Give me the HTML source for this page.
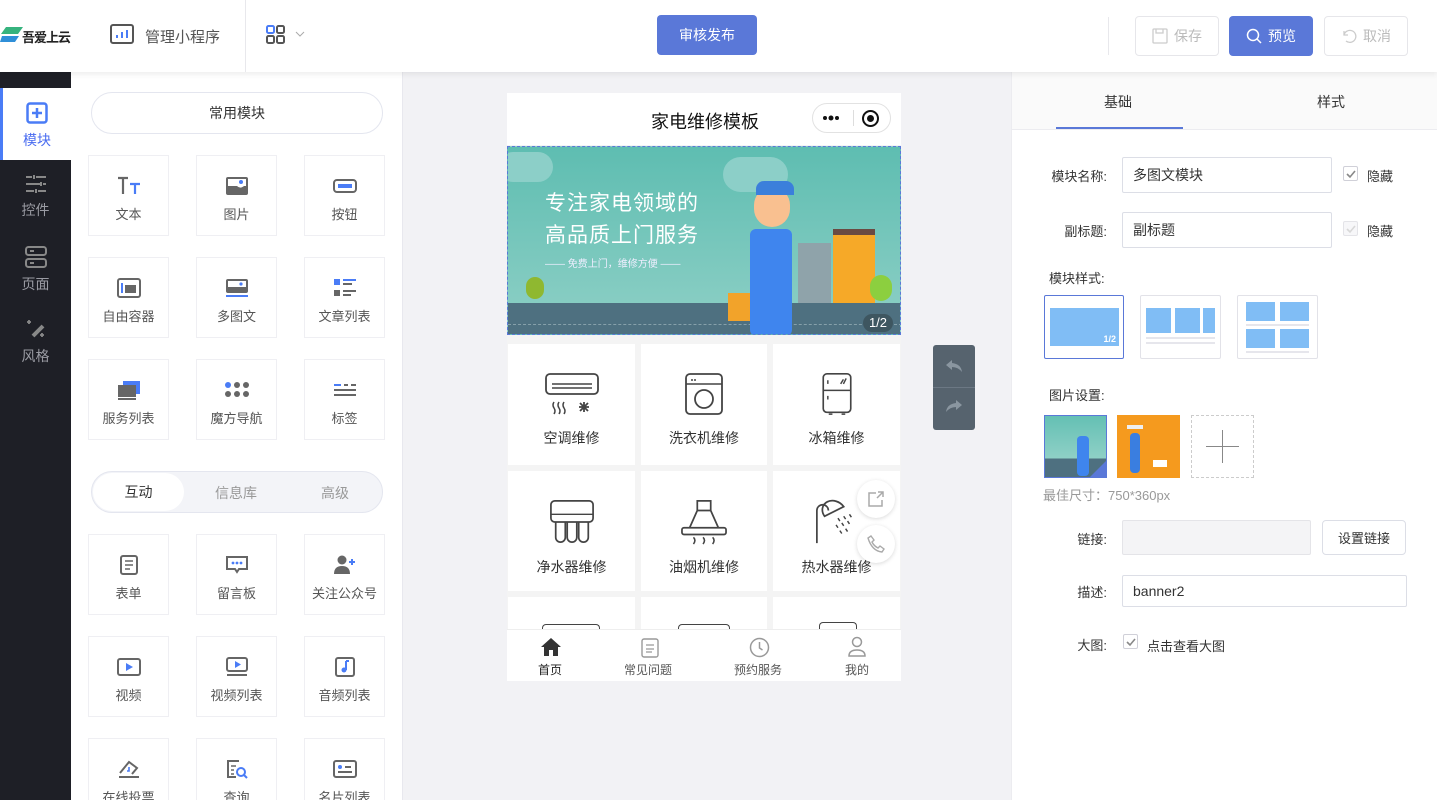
<!DOCTYPE html>
<html style="width:1437px;height:800px;overflow:hidden"><head><meta charset="utf-8">
<style>
*{margin:0;padding:0;box-sizing:border-box}
body{width:1437px;height:800px;overflow:hidden;position:relative;background:#f2f2f5;font-family:"Liberation Sans","Noto Sans CJK SC",sans-serif;color:#333;font-size:14px}
.a{position:absolute}
.top{left:0;top:0;width:1437px;height:72px;background:#fff;box-shadow:0 2px 6px rgba(0,0,0,.08);z-index:5}
.btn{position:absolute;border-radius:4px;font-size:14px;display:flex;align-items:center;justify-content:center;gap:6px}
.side{left:0;top:72px;width:71px;height:728px;background:#1e1f26}
.si{position:absolute;left:0;width:71px;height:72px;color:#9a9ba3;font-size:14px;text-align:center}
.si svg{display:block;margin:14px auto 6px}
.panel{left:71px;top:72px;width:332px;height:728px;background:#fff;border-right:1px solid #e8e8ee}
.clip{position:absolute;left:0;top:0;width:1437px;height:800px;overflow:hidden}
.cell{position:absolute;width:81px;height:81px;border:1px solid #efeff3;background:#fff;text-align:center;font-size:13px;color:#555}
.cell svg{display:block;margin:20px auto 8px}
.pill{position:absolute;left:91px;width:292px;height:42px;border:1px solid #e4e6ef;border-radius:21px;text-align:center;line-height:40px;font-size:14px}
.canvas{left:403px;top:72px;width:608px;height:728px;background:#f2f2f5}
.phone{left:507px;top:93px;width:394px;height:588px;background:#f4f4f4;overflow:hidden}
.gc{position:absolute;background:#fff;text-align:center;font-size:14px;color:#333}
.gc svg{display:block;margin:28px auto 12px}
.right{left:1011px;top:72px;width:426px;height:728px;background:#fff;border-left:1px solid #ececf0}
.lbl{position:absolute;font-size:13px;color:#333;text-align:right;width:110px}
.inp{position:absolute;border:1px solid #dcdee6;border-radius:2px;font-size:14px;padding-left:10px;display:flex;align-items:center;background:#fff}
.cb{position:absolute;width:15px;height:15px;border:1px solid #d0d0d8;border-radius:2px;background:#fff}
</style></head><body><div class="clip">

<!-- TOP BAR -->
<div class="a top">
  <svg class="a" style="left:0;top:26px" width="24" height="18" viewBox="0 0 24 18"><path d="M6 1h17l-5 7H1z" fill="#36b37e"/><path d="M2 10h17l-4 6H0z" fill="#2f8fd8"/></svg>
  <div class="a" style="left:22px;top:27px;font-size:13px;font-weight:bold;color:#222;letter-spacing:-1px">吾爱上云</div>
  <svg class="a" style="left:110px;top:24px" width="24" height="20" viewBox="0 0 24 20"><rect x="1" y="1" width="22" height="18" rx="2" fill="none" stroke="#555" stroke-width="2"/><path d="M7 14v-3M12 14V8M17 14V6" stroke="#4a7cf6" stroke-width="2"/></svg>
  <div class="a" style="left:145px;top:26px;font-size:15px;color:#555">管理小程序</div>
  <div class="a" style="left:245px;top:0;width:1px;height:72px;background:#e8e8ec"></div>
  <svg class="a" style="left:266px;top:25px" width="20" height="19" viewBox="0 0 20 19"><rect x="1" y="1" width="7" height="7" rx="1.5" fill="none" stroke="#4a7cf6" stroke-width="2"/><rect x="11" y="1" width="7" height="7" rx="1.5" fill="none" stroke="#555" stroke-width="2"/><rect x="1" y="11" width="7" height="7" rx="1.5" fill="none" stroke="#555" stroke-width="2"/><rect x="11" y="11" width="7" height="7" rx="1.5" fill="none" stroke="#555" stroke-width="2"/></svg>
  <svg class="a" style="left:295px;top:31px" width="10" height="6"><path d="M1 1l4 4 4-4" fill="none" stroke="#aaa"/></svg>
  <div class="btn" style="left:657px;top:15px;width:100px;height:40px;background:#5a78d8;color:#fff">审核发布</div>
  <div class="a" style="left:1108px;top:17px;width:1px;height:38px;background:#e8e8ec"></div>
  <div class="btn" style="left:1135px;top:16px;width:84px;height:40px;border:1px solid #e6e6ea;color:#bbb"><svg width="16" height="16" viewBox="0 0 16 16"><rect x="1" y="1" width="14" height="14" rx="1" fill="none" stroke="#ccc" stroke-width="1.3"/><path d="M4 1v4h7V1" fill="none" stroke="#ccc" stroke-width="1.3"/></svg>保存</div>
  <div class="btn" style="left:1229px;top:16px;width:84px;height:40px;background:#5a78d8;color:#fff"><svg width="16" height="16" viewBox="0 0 16 16"><circle cx="7" cy="7" r="5.5" fill="none" stroke="#fff" stroke-width="1.5"/><path d="M11 11l4 4" stroke="#fff" stroke-width="1.5"/></svg>预览</div>
  <div class="btn" style="left:1324px;top:16px;width:84px;height:40px;border:1px solid #e6e6ea;color:#bbb"><svg width="16" height="16" viewBox="0 0 16 16"><path d="M3 3v4h4" fill="none" stroke="#ccc" stroke-width="1.3"/><path d="M3 7a6 6 0 1 1 2 6" fill="none" stroke="#ccc" stroke-width="1.3"/></svg>取消</div>
</div>

<!-- SIDEBAR -->
<div class="a side">
  <div class="si" style="top:16px;background:#fff;color:#4a6cf0;border-left:3px solid #4a7cf6">
    <svg width="22" height="22" viewBox="0 0 22 22"><rect x="1.5" y="1.5" width="19" height="19" rx="2.5" fill="none" stroke="#4a7cf6" stroke-width="2.5"/><path d="M11 6v10M6 11h10" stroke="#4a7cf6" stroke-width="2.5"/></svg>模块</div>
  <div class="si" style="top:88px"><svg width="22" height="20" viewBox="0 0 22 20"><path d="M1 3h6M11 3h10M1 10h14M18 10h3M1 17h8M13 17h8M9 1v4M16 8v4M11 15v4" stroke="#888" stroke-width="2"/></svg>控件</div>
  <div class="si" style="top:160px"><svg width="22" height="22" viewBox="0 0 22 22"><rect x="1" y="1" width="20" height="8" rx="2.5" fill="none" stroke="#888" stroke-width="2"/><rect x="1" y="13" width="20" height="8" rx="2.5" fill="none" stroke="#888" stroke-width="2"/><path d="M5 5h4M5 17h4" stroke="#888" stroke-width="2"/></svg>页面</div>
  <div class="si" style="top:232px"><svg width="22" height="22" viewBox="0 0 22 22"><path d="M8 18l10-10" stroke="#888" stroke-width="4"/><path d="M4 2v4M2 4h4M17 15v4M15 17h4" stroke="#888" stroke-width="1.8"/></svg>风格</div>
</div>

<!-- MODULE PANEL -->
<div class="a panel"></div>
<div class="pill" style="top:92px">常用模块</div>
<div class="cell" style="left:88px;top:155px"><svg width="24" height="20" viewBox="0 0 24 20"><path d="M1 2h10M6 2v16" stroke="#666" stroke-width="2.2"/><path d="M13 8h10M18 8v10" stroke="#4a7cf6" stroke-width="2.2"/></svg>文本</div>
<div class="cell" style="left:196px;top:155px"><svg width="24" height="20" viewBox="0 0 24 20"><rect x="1" y="1" width="22" height="18" rx="2" fill="#666"/><rect x="3" y="3" width="18" height="7" fill="#fff"/><path d="M3 10q5-4 9 0t9-2v1H3z" fill="#fff"/><circle cx="16" cy="6" r="2" fill="#4a7cf6"/></svg>图片</div>
<div class="cell" style="left:304px;top:155px"><svg width="24" height="20" viewBox="0 0 24 20"><rect x="1" y="4" width="22" height="12" rx="3" fill="none" stroke="#666" stroke-width="2"/><rect x="5" y="8" width="14" height="4" fill="#4a7cf6"/></svg>按钮</div>
<div class="cell" style="left:88px;top:257px"><svg width="24" height="20" viewBox="0 0 24 20"><rect x="1" y="1" width="22" height="18" rx="2" fill="none" stroke="#666" stroke-width="2"/><path d="M5 5v10" stroke="#4a7cf6" stroke-width="2"/><rect x="8" y="5" width="11" height="10" fill="#666"/><rect x="8" y="5" width="11" height="2" fill="#fff"/></svg>自由容器</div>
<div class="cell" style="left:196px;top:257px"><svg width="24" height="20" viewBox="0 0 24 20"><rect x="1" y="1" width="22" height="14" rx="2" fill="#666"/><rect x="3" y="3" width="18" height="6" fill="#fff"/><circle cx="16" cy="6" r="1.6" fill="#4a7cf6"/><path d="M1 18h22" stroke="#4a7cf6" stroke-width="2"/></svg>多图文</div>
<div class="cell" style="left:304px;top:257px"><svg width="24" height="20" viewBox="0 0 24 20"><rect x="1" y="1" width="6" height="6" fill="#4a7cf6"/><rect x="1" y="12" width="6" height="6" fill="#666"/><path d="M10 6h9M10 13h13M10 17h8" stroke="#666" stroke-width="2"/><path d="M10 2h13" stroke="#4a7cf6" stroke-width="2"/></svg>文章列表</div>
<div class="cell" style="left:88px;top:359px"><svg width="24" height="20" viewBox="0 0 24 20"><rect x="6" y="1" width="17" height="13" fill="#4a7cf6"/><rect x="1" y="5" width="18" height="12" fill="#666"/><path d="M1 19h18" stroke="#666" stroke-width="2"/></svg>服务列表</div>
<div class="cell" style="left:196px;top:359px"><svg width="26" height="20" viewBox="0 0 26 20"><circle cx="4" cy="5" r="3" fill="#4a7cf6"/><circle cx="13" cy="5" r="3" fill="#666"/><circle cx="22" cy="5" r="3" fill="#666"/><circle cx="4" cy="14" r="3" fill="#666"/><circle cx="13" cy="14" r="3" fill="#666"/><circle cx="22" cy="14" r="3" fill="#666"/></svg>魔方导航</div>
<div class="cell" style="left:304px;top:359px"><svg width="24" height="20" viewBox="0 0 24 20"><path d="M1 5h7" stroke="#4a7cf6" stroke-width="2"/><path d="M11 5h4M18 5h5M1 10h22M1 15h22" stroke="#666" stroke-width="2"/></svg>标签</div>

<div class="pill" style="top:471px;background:#f3f4f8;color:#999"></div>
<div class="a" style="left:93px;top:473px;width:91px;height:38px;border-radius:19px;background:#fff;text-align:center;line-height:38px;color:#333">互动</div>
<div class="a" style="left:215px;top:483px;color:#999">信息库</div>
<div class="a" style="left:321px;top:483px;color:#999">高级</div>

<div class="cell" style="left:88px;top:534px"><svg width="24" height="20" viewBox="0 0 24 20"><rect x="4" y="1" width="16" height="18" rx="2" fill="none" stroke="#666" stroke-width="2"/><path d="M8 6h8M8 10h8M8 14h5" stroke="#666" stroke-width="1.6"/></svg>表单</div>
<div class="cell" style="left:196px;top:534px"><svg width="24" height="20" viewBox="0 0 24 20"><path d="M2 2h20v12h-8l-2 3-2-3H2z" fill="none" stroke="#666" stroke-width="2"/><circle cx="8" cy="8" r="1.4" fill="#4a7cf6"/><circle cx="12" cy="8" r="1.4" fill="#4a7cf6"/><circle cx="16" cy="8" r="1.4" fill="#4a7cf6"/></svg>留言板</div>
<div class="cell" style="left:304px;top:534px"><svg width="24" height="20" viewBox="0 0 24 20"><circle cx="9" cy="5" r="4.5" fill="#666"/><path d="M1 19q0-8 8-8t8 8z" fill="#666"/><path d="M19 4v6M16 7h6" stroke="#4a7cf6" stroke-width="2"/></svg>关注公众号</div>
<div class="cell" style="left:88px;top:636px"><svg width="24" height="20" viewBox="0 0 24 20"><rect x="1" y="2" width="22" height="16" rx="2" fill="none" stroke="#666" stroke-width="2"/><path d="M9 6v8l7-4z" fill="#4a7cf6"/></svg>视频</div>
<div class="cell" style="left:196px;top:636px"><svg width="24" height="20" viewBox="0 0 24 20"><rect x="2" y="1" width="20" height="13" rx="2" fill="none" stroke="#666" stroke-width="2"/><path d="M10 4v7l6-3.5z" fill="#4a7cf6"/><path d="M2 18h20" stroke="#666" stroke-width="2"/></svg>视频列表</div>
<div class="cell" style="left:304px;top:636px"><svg width="24" height="20" viewBox="0 0 24 20"><rect x="3" y="1" width="18" height="18" rx="2" fill="none" stroke="#666" stroke-width="2"/><path d="M13 4v9" stroke="#4a7cf6" stroke-width="2"/><circle cx="11" cy="13" r="2.5" fill="#4a7cf6"/><path d="M13 4h3" stroke="#4a7cf6" stroke-width="2"/></svg>音频列表</div>
<div class="cell" style="left:88px;top:738px"><svg width="24" height="20" viewBox="0 0 24 20"><path d="M3 14l9-11 8 6-5 6" fill="none" stroke="#666" stroke-width="2"/><path d="M2 18h20" stroke="#666" stroke-width="2"/><path d="M12 8v4h-2" stroke="#4a7cf6" stroke-width="1.6" fill="none"/></svg>在线投票</div>
<div class="cell" style="left:196px;top:738px"><svg width="24" height="20" viewBox="0 0 24 20"><path d="M14 2H3v16h8" fill="none" stroke="#666" stroke-width="2"/><path d="M6 7h5M6 11h3M6 15h3" stroke="#666" stroke-width="1.6"/><circle cx="16" cy="13" r="4" fill="none" stroke="#4a7cf6" stroke-width="2"/><path d="M19 16l3 3" stroke="#4a7cf6" stroke-width="2"/></svg>查询</div>
<div class="cell" style="left:304px;top:738px"><svg width="24" height="20" viewBox="0 0 24 20"><rect x="1" y="2" width="22" height="16" rx="2" fill="none" stroke="#666" stroke-width="2"/><circle cx="7" cy="8" r="2" fill="#4a7cf6"/><path d="M5 13h14M12 8h6" stroke="#666" stroke-width="2"/></svg>名片列表</div>

<!-- CANVAS -->
<div class="a canvas"></div>
<div class="a phone">
  <div class="a" style="left:0;top:0;width:394px;height:52px;background:#fff"></div>
  <div class="a" style="left:144px;top:15px;font-size:18px;color:#111">家电维修模板</div>
  <div class="a" style="left:305px;top:10px;width:79px;height:30px;border:1px solid #e2e2e2;border-radius:15px;background:#fff"></div>
  <div class="a" style="left:316px;top:23px;width:4px;height:4px;border-radius:2px;background:#111;box-shadow:6px 0 0 0.5px #111,12px 0 0 #111"></div>
  <div class="a" style="left:346px;top:17px;width:1px;height:16px;background:#ddd"></div>
  <div class="a" style="left:355px;top:17px;width:17px;height:17px;border-radius:50%;border:2px solid #111"></div>
  <div class="a" style="left:360px;top:22px;width:7px;height:7px;border-radius:50%;background:#111"></div>
  <!-- banner -->
  <div class="a" style="left:0;top:53px;width:394px;height:189px;background:linear-gradient(#5ebdb1,#8fd0c6);border:1px dashed #5a78d8;overflow:hidden">
    <div class="a" style="left:-10px;top:5px;width:55px;height:30px;border-radius:15px;background:#8ccfc8"></div>
    <div class="a" style="left:215px;top:10px;width:65px;height:35px;border-radius:18px;background:#8ccfc8"></div>
    <div class="a" style="left:37px;top:40px;font-size:21px;color:#fff;letter-spacing:1px">专注家电领域的</div>
    <div class="a" style="left:37px;top:72px;font-size:21px;color:#fff;letter-spacing:1px">高品质上门服务</div>
    <div class="a" style="left:37px;top:108px;font-size:10px;color:#eef">——  免费上门，维修方便  ——</div>
    <div class="a" style="left:290px;top:96px;width:33px;height:86px;background:#8fa3aa"></div>
    <div class="a" style="left:325px;top:86px;width:42px;height:100px;background:#f6a928"></div>
    <div class="a" style="left:325px;top:82px;width:42px;height:6px;background:#6a4a42"></div>
    <div class="a" style="left:18px;top:130px;width:18px;height:22px;border-radius:9px;background:#8fb830"></div>
    <div class="a" style="left:362px;top:128px;width:22px;height:26px;border-radius:11px;background:#8ccf3f"></div>
    <div class="a" style="left:0;top:156px;width:394px;height:33px;background:#4e7080"></div>
    <div class="a" style="left:0;top:177px;width:394px;border-top:1px dashed #86a0aa"></div>
    <div class="a" style="left:220px;top:146px;width:32px;height:28px;background:#f2a32a"></div>
    <div class="a" style="left:246px;top:40px;width:36px;height:40px;border-radius:18px;background:#f9c090"></div>
    <div class="a" style="left:248px;top:34px;width:38px;height:14px;border-radius:8px 8px 0 0;background:#3b7fdb"></div>
    <div class="a" style="left:242px;top:82px;width:42px;height:107px;border-radius:6px;background:#3f85ee"></div>
    <div class="a" style="left:355px;top:167px;width:30px;height:18px;border-radius:9px;background:#3e5660;color:#fff;font-size:13px;text-align:center;line-height:18px">1/2</div>
  </div>
  <!-- grid -->
  <div class="gc" style="left:1px;top:251px;width:127px;height:121px"><svg width="56" height="44" viewBox="0 0 56 44"><rect x="2" y="2" width="52" height="20" rx="4" fill="none" stroke="#444" stroke-width="1.8"/><path d="M8 12h40M8 16h40" stroke="#444" stroke-width="1.5"/><path d="M10 30q-2 3 0 6t0 6M15 30q-2 3 0 6t0 6M20 30q-2 3 0 6t0 6" fill="none" stroke="#444" stroke-width="1.5"/><path d="M40 30v10M35 35h10M36 31l8 8M44 31l-8 8" stroke="#444" stroke-width="1.8"/></svg>空调维修</div>
  <div class="gc" style="left:134px;top:251px;width:126px;height:121px"><svg width="40" height="44" viewBox="0 0 40 44"><rect x="2" y="2" width="36" height="40" rx="4" fill="none" stroke="#444" stroke-width="1.8"/><path d="M2 12h36" stroke="#444" stroke-width="1.5"/><circle cx="8" cy="8" r="1" fill="#444"/><circle cx="11" cy="8" r="1" fill="#444"/><circle cx="20" cy="27" r="9" fill="none" stroke="#444" stroke-width="1.8"/></svg>洗衣机维修</div>
  <div class="gc" style="left:266px;top:251px;width:127px;height:121px"><svg width="34" height="44" viewBox="0 0 34 48"><rect x="2" y="2" width="30" height="42" rx="4" fill="none" stroke="#444" stroke-width="1.8"/><path d="M2 20h30M7 9v4M7 26v4M8 46h4M22 46h4M24 8l-3 5M27 7l-3 6" stroke="#444" stroke-width="1.6"/></svg>冰箱维修</div>
  <div class="gc" style="left:1px;top:378px;width:127px;height:120px"><svg width="48" height="46" viewBox="0 0 48 48"><rect x="2" y="2" width="44" height="22" rx="4" fill="none" stroke="#444" stroke-width="1.8"/><path d="M2 16h44" stroke="#444" stroke-width="1.5"/><path d="M7 24v16a5 5 0 0 0 10 0V24M19 24v16a5 5 0 0 0 10 0V24M31 24v16a5 5 0 0 0 10 0V24" fill="none" stroke="#444" stroke-width="1.8"/></svg>净水器维修</div>
  <div class="gc" style="left:134px;top:378px;width:126px;height:120px"><svg width="50" height="46" viewBox="0 0 50 48"><path d="M18 2h14v10H18zM18 12l-8 18M32 12l8 18" fill="none" stroke="#444" stroke-width="1.8"/><rect x="2" y="30" width="46" height="7" rx="2" fill="none" stroke="#444" stroke-width="1.8"/><path d="M14 40q3 3 0 7M24 40q3 3 0 7M34 40q3 3 0 7" fill="none" stroke="#444" stroke-width="1.6"/></svg>油烟机维修</div>
  <div class="gc" style="left:266px;top:378px;width:127px;height:120px"><svg width="50" height="46" viewBox="0 0 50 48"><path d="M4 46V12a6 6 0 0 1 12 0" fill="none" stroke="#444" stroke-width="1.8"/><path d="M12 18a12 10 30 0 1 20-10z" fill="none" stroke="#444" stroke-width="1.8"/><path d="M26 20l2 3M32 18l2 3M38 16l2 3M24 27l2 3M30 25l2 3M36 23l2 3M28 33l2 3M34 31l2 3" stroke="#444" stroke-width="1.5"/></svg>热水器维修</div>
  <div class="gc" style="left:1px;top:504px;width:127px;height:40px"></div>
  <div class="gc" style="left:134px;top:504px;width:126px;height:40px"></div>
  <div class="gc" style="left:266px;top:504px;width:127px;height:40px"></div>
  <div class="a" style="left:35px;top:531px;width:58px;height:10px;border:1.8px solid #444;border-bottom:none;border-radius:4px 4px 0 0"></div>
  <div class="a" style="left:171px;top:531px;width:52px;height:10px;border:1.8px solid #444;border-bottom:none;border-radius:4px 4px 0 0"></div>
  <div class="a" style="left:312px;top:529px;width:38px;height:10px;border:1.8px solid #444;border-bottom:none;border-radius:4px 4px 0 0"></div>
  <!-- float buttons -->
  <div class="a" style="left:350px;top:387px;width:38px;height:38px;border-radius:50%;background:#fff;box-shadow:0 1px 4px rgba(0,0,0,.15)"><svg style="margin:10px" width="18" height="18" viewBox="0 0 18 18"><path d="M9 3H2v13h13V10M10 8l6-6M11 2h5v5" fill="none" stroke="#aaa" stroke-width="1.5"/></svg></div>
  <div class="a" style="left:350px;top:432px;width:38px;height:38px;border-radius:50%;background:#fff;box-shadow:0 1px 4px rgba(0,0,0,.15)"><svg style="margin:10px" width="18" height="18" viewBox="0 0 18 18"><path d="M4 1l3 4-2 2q2 4 6 6l2-2 4 3-2 3Q5 16 1 3z" fill="none" stroke="#aaa" stroke-width="1.4"/></svg></div>
  <!-- tabbar -->
  <div class="a" style="left:0;top:536px;width:394px;height:52px;background:#fff;border-top:1px solid #eee;font-size:12px;color:#555">
    <svg class="a" style="left:33px;top:7px" width="22" height="20" viewBox="0 0 22 20"><path d="M11 1L1 10h3v9h5v-6h4v6h5v-9h3z" fill="#333"/></svg>
    <div class="a" style="left:31px;top:31px;color:#222">首页</div>
    <svg class="a" style="left:134px;top:8px" width="18" height="20" viewBox="0 0 18 20"><rect x="1" y="1" width="16" height="18" rx="2" fill="none" stroke="#999" stroke-width="1.4"/><path d="M5 7h8M5 11h8M5 14h6" stroke="#999" stroke-width="1.2"/></svg>
    <div class="a" style="left:117px;top:31px">常见问题</div>
    <svg class="a" style="left:242px;top:7px" width="21" height="21" viewBox="0 0 21 21"><circle cx="10.5" cy="10.5" r="9" fill="none" stroke="#999" stroke-width="1.5"/><path d="M10.5 5v6l3 2" fill="none" stroke="#999" stroke-width="1.5"/></svg>
    <div class="a" style="left:227px;top:31px">预约服务</div>
    <svg class="a" style="left:341px;top:6px" width="18" height="22" viewBox="0 0 18 22"><circle cx="9" cy="6" r="4.5" fill="none" stroke="#999" stroke-width="1.5"/><path d="M1 20q0-6 8-6t8 6z" fill="none" stroke="#999" stroke-width="1.5"/></svg>
    <div class="a" style="left:338px;top:31px">我的</div>
  </div>
</div>
<div class="a" style="left:933px;top:345px;width:42px;height:85px;border-radius:3px;background:#56636e"></div>
<div class="a" style="left:933px;top:387px;width:42px;height:1px;background:#6c7884"></div>
<svg class="a" style="left:945px;top:359px" width="18" height="14" viewBox="0 0 18 14"><path d="M7 1L1 6l6 5V8q6 0 10 5-1-8-10-9z" fill="#8a96a0"/></svg>
<svg class="a" style="left:945px;top:399px" width="18" height="14" viewBox="0 0 18 14"><path d="M11 1l6 5-6 5V8q-6 0-10 5 1-8 10-9z" fill="#8a96a0"/></svg>

<!-- RIGHT PANEL -->
<div class="a right">
  <div class="a" style="left:0;top:0;width:426px;height:58px;background:#fafafa;border-bottom:1px solid #ececf0"></div>
  <div class="a" style="left:92px;top:20px;font-size:14px">基础</div>
  <div class="a" style="left:44px;top:55px;width:127px;height:2px;background:#5a78d8"></div>
  <div class="a" style="left:305px;top:20px;font-size:14px">样式</div>
</div>
<div class="lbl" style="left:997px;top:166px">模块名称:</div>
<div class="inp" style="left:1122px;top:157px;width:210px;height:36px">多图文模块</div>
<div class="cb" style="left:1343px;top:166px"><svg width="13" height="13"><path d="M3 7l3 3 5-6" fill="none" stroke="#888" stroke-width="1.6"/></svg></div>
<div class="a" style="left:1367px;top:166px;font-size:13px">隐藏</div>
<div class="lbl" style="left:997px;top:221px">副标题:</div>
<div class="inp" style="left:1122px;top:212px;width:210px;height:36px">副标题</div>
<div class="cb" style="left:1343px;top:221px;background:#f7f7f9;border-color:#e4e4e8"><svg width="13" height="13"><path d="M3 7l3 3 5-6" fill="none" stroke="#d8d8d8" stroke-width="1.6"/></svg></div>
<div class="a" style="left:1367px;top:221px;font-size:13px">隐藏</div>
<div class="a" style="left:1049px;top:268px;font-size:13px">模块样式:</div>
<div class="a" style="left:1044px;top:295px;width:80px;height:64px;border:1px solid #5a78d8;border-radius:2px"></div>
<div class="a" style="left:1050px;top:308px;width:69px;height:38px;background:#80bdf5;color:#fff;font-size:9px;font-weight:bold;text-align:right;padding:26px 3px 0 0">1/2</div>
<div class="a" style="left:1140px;top:295px;width:81px;height:64px;border:1px solid #e2e2e8;border-radius:2px"></div>
<div class="a" style="left:1146px;top:308px;width:25px;height:25px;background:#80bdf5"></div>
<div class="a" style="left:1175px;top:308px;width:25px;height:25px;background:#80bdf5"></div>
<div class="a" style="left:1203px;top:308px;width:12px;height:25px;background:#80bdf5"></div>
<div class="a" style="left:1146px;top:337px;width:69px;height:2px;background:#e6e6ec;box-shadow:0 5px 0 #e6e6ec"></div>
<div class="a" style="left:1237px;top:295px;width:81px;height:64px;border:1px solid #e2e2e8;border-radius:2px"></div>
<div class="a" style="left:1246px;top:302px;width:29px;height:19px;background:#80bdf5"></div>
<div class="a" style="left:1280px;top:302px;width:29px;height:19px;background:#80bdf5"></div>
<div class="a" style="left:1246px;top:329px;width:29px;height:19px;background:#80bdf5"></div>
<div class="a" style="left:1280px;top:329px;width:29px;height:19px;background:#80bdf5"></div>
<div class="a" style="left:1246px;top:324px;width:63px;height:2px;background:#e6e6ec;box-shadow:0 27px 0 #e6e6ec"></div>
<div class="a" style="left:1049px;top:385px;font-size:13px">图片设置:</div>
<div class="a" style="left:1044px;top:415px;width:63px;height:63px;border:1px solid #5a78d8;background:linear-gradient(#64c0b4 0,#8fd0c6 70%,#4e7080 70%);overflow:hidden">
  <div class="a" style="left:32px;top:20px;width:12px;height:40px;background:#3f85ee;border-radius:4px"></div>
  <div class="a" style="left:44px;top:44px;width:0;height:0;border-left:18px solid transparent;border-bottom:18px solid #5a78d8"></div>
</div>
<div class="a" style="left:1117px;top:415px;width:63px;height:63px;background:#f59a1e;overflow:hidden">
  <div class="a" style="left:10px;top:10px;width:16px;height:4px;background:#eee"></div>
  <div class="a" style="left:13px;top:18px;width:10px;height:40px;background:#3a7ee0;border-radius:4px"></div>
  <div class="a" style="left:36px;top:45px;width:14px;height:7px;background:#fff"></div>
</div>
<div class="a" style="left:1191px;top:415px;width:63px;height:63px;border:1px dashed #ccc"></div>
<div class="a" style="left:1206px;top:446px;width:33px;height:1px;background:#888"></div>
<div class="a" style="left:1222px;top:430px;width:1px;height:33px;background:#888"></div>
<div class="a" style="left:1043px;top:485px;font-size:13px;color:#999">最佳尺寸：750*360px</div>
<div class="lbl" style="left:997px;top:529px">链接:</div>
<div class="inp" style="left:1122px;top:520px;width:189px;height:35px;background:#f4f4f6;border-color:#e4e4e8"></div>
<div class="btn" style="left:1322px;top:520px;width:84px;height:35px;border:1px solid #dcdee6;font-size:13px">设置链接</div>
<div class="lbl" style="left:997px;top:582px">描述:</div>
<div class="inp" style="left:1122px;top:575px;width:285px;height:32px">banner2</div>
<div class="lbl" style="left:997px;top:635px">大图:</div>
<div class="cb" style="left:1123px;top:634px"><svg width="13" height="13"><path d="M3 7l3 3 5-6" fill="none" stroke="#888" stroke-width="1.6"/></svg></div>
<div class="a" style="left:1147px;top:636px;font-size:13px">点击查看大图</div>
</div></body></html>
